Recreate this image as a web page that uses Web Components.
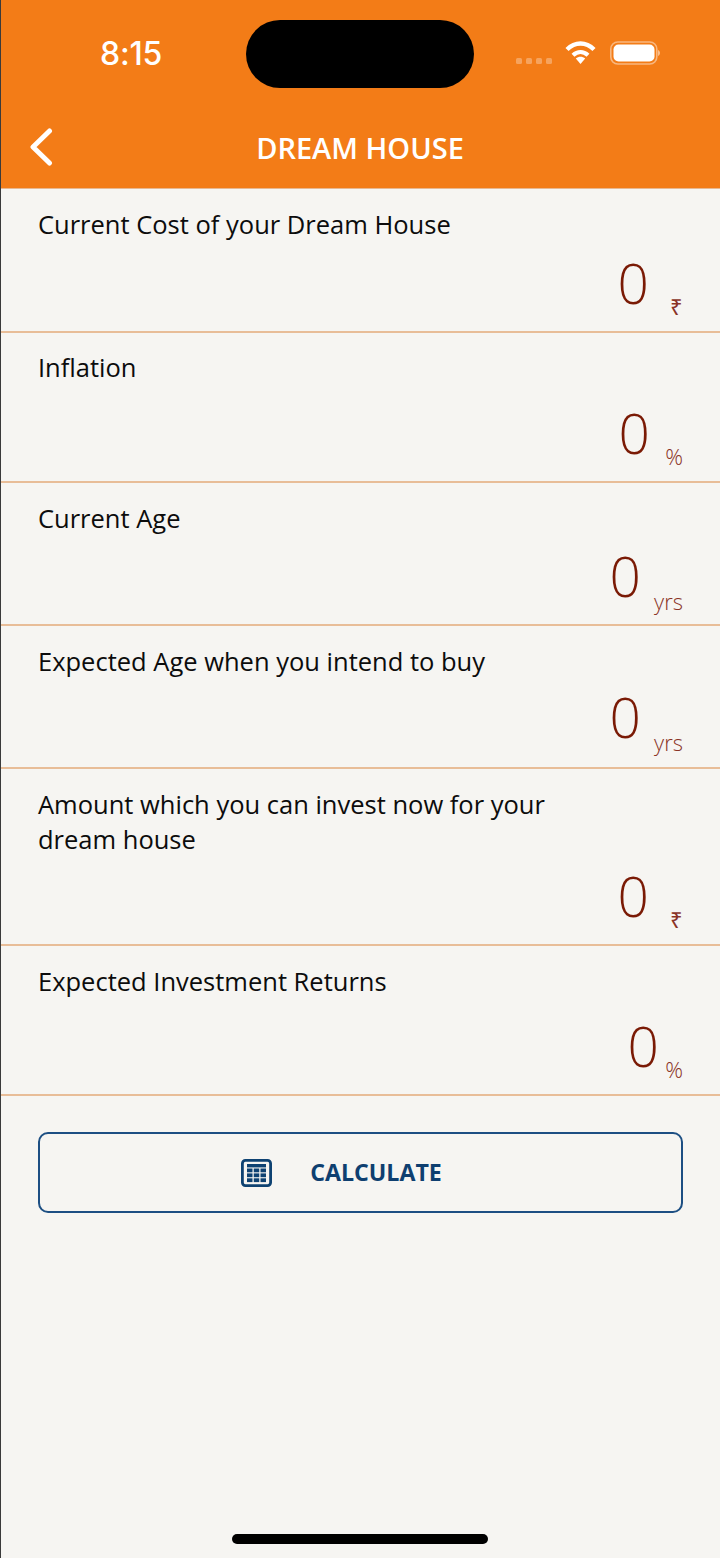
<!DOCTYPE html>
<html>
<head>
<meta charset="utf-8">
<title>Dream House</title>
<style>
  html, body { margin: 0; padding: 0; background: #f6f5f2; }
</style>
</head>
<body>
<app-screen>
  <status-bar slot="top" time="8:15"></status-bar>
  <nav-bar slot="top" title="DREAM HOUSE"></nav-bar>
  <input-row h="144" label="Current Cost of your Dream House" unit="₹" unit-w="34"></input-row>
  <input-row h="150" pad="17" label="Inflation" unit="%" unit-w="33"></input-row>
  <input-row h="143" drop="8" label="Current Age" unit="yrs" unit-w="42"></input-row>
  <input-row h="143" drop="8" lift="18" label="Expected Age when you intend to buy" unit="yrs" unit-w="42"></input-row>
  <input-row h="177" label="Amount which you can invest now for your dream house" unit="₹" unit-w="34"></input-row>
  <input-row h="150" label="Expected Investment Returns" unit="%" unit-w="24"></input-row>
  <calc-button>CALCULATE</calc-button>
  <home-bar slot="bottom"></home-bar>
</app-screen>

<script>
class AppScreen extends HTMLElement {
  constructor() {
    super();
    this.attachShadow({ mode: 'open' });
    this.shadowRoot.innerHTML = `
      <style>
        :host {
          display: flex;
          flex-direction: column;
          width: 720px;
          height: 1558px;
          box-sizing: border-box;
          border-left: 1px solid #3a3a3a;
          background: #f6f5f2;
          font-family: "Open Sans", sans-serif;
          overflow: hidden;
        }
        main { flex: 1; display: flex; flex-direction: column; }
      </style>
      <slot name="top"></slot>
      <main><slot></slot></main>
      <slot name="bottom"></slot>
    `;
  }
}

class StatusBar extends HTMLElement {
  constructor() {
    super();
    this.attachShadow({ mode: 'open' });
    this.shadowRoot.innerHTML = `
      <style>
        :host { display: flex; align-items: center; height: 108px; background: #f37c17; color: #fff; }
        .time { margin-left: 99px; margin-top: -1px; font: 500 32px/40px Inter, "Open Sans", sans-serif; letter-spacing: -0.2px; width: 146px; }
        .island { width: 228px; height: 68px; border-radius: 34px; background: #000; }
        .right { display: flex; align-items: center; margin-left: 42px; }
        .dots { display: flex; gap: 4px; margin-top: 14px; margin-right: 13px; }
        .dots i { width: 6px; height: 6px; border-radius: 1.5px; background: rgba(255,255,255,.3); }
        svg { display: block; }
      </style>
      <span class="time"></span>
      <div class="island"></div>
      <div class="right">
        <div class="dots"><i></i><i></i><i></i><i></i></div>
        <svg width="31" height="25" viewBox="0 0 31 25" style="margin-top:-3px">
          <path d="M2 9.5C10 1.5 21 1.5 29 9.5" fill="none" stroke="#fff" stroke-width="4.4"/>
          <path d="M8 15.2C12.5 11 18.5 11 23 15.2" fill="none" stroke="#fff" stroke-width="4.2"/>
          <path d="M10.8 18.6C13.6 16.1 17.4 16.1 20.2 18.6L15.5 24Z" fill="#fff"/>
        </svg>
        <svg width="50" height="24" viewBox="0 0 50 24" style="margin-left:14px;margin-top:-2px">
          <rect x=".8" y="1" width="46" height="22" rx="7" fill="none" stroke="#fff" stroke-opacity=".45" stroke-width="1.6"/>
          <rect x="3.5" y="3.5" width="41" height="17" rx="5" fill="#fff"/>
          <path d="M48 9C49.2 9.6 50 10.7 50 12C50 13.3 49.2 14.4 48 15Z" fill="#fff" fill-opacity=".5"/>
        </svg>
      </div>
    `;
    this.shadowRoot.querySelector('.time').textContent = this.getAttribute('time');
  }
}

class NavBar extends HTMLElement {
  constructor() {
    super();
    this.attachShadow({ mode: 'open' });
    this.shadowRoot.innerHTML = `
      <style>
        :host { display: flex; align-items: center; justify-content: center; height: 80px; background: #f37c17; color: #fff; position: relative; border-bottom: 1px solid #e8b890; }
        .back { position: absolute; left: 27px; top: 20px; display: block; }
        .title { font-size: 29px; font-weight: 600; line-height: 40px; margin-left: -1px; }
      </style>
      <svg class="back" width="26" height="38" viewBox="0 0 26 38">
        <path d="M21.5 3L5 19L21.5 35" fill="none" stroke="#fff" stroke-width="5" stroke-linecap="round" stroke-linejoin="round"/>
      </svg>
      <span class="title"></span>
    `;
    this.shadowRoot.querySelector('.title').textContent = this.getAttribute('title');
  }
}

class InputRow extends HTMLElement {
  constructor() {
    super();
    this.attachShadow({ mode: 'open' });
    this.shadowRoot.innerHTML = `
      <style>
        :host {
          display: flex;
          flex-direction: column;
          justify-content: space-between;
          box-sizing: border-box;
          border-bottom: 2px solid #e8bd98;
          padding: 18px 37px 16px;
        }
        .label { font-size: 25.5px; line-height: 35px; color: #0c0c0c; max-width: 540px; }
        .val { display: flex; justify-content: flex-end; align-items: flex-end; color: #7a1a05; }
        .num { font-size: 55px; font-weight: 300; line-height: 64px; }
        .unit { font-size: 22px; font-weight: 300; line-height: 30px; color: #8a3326; text-align: right; margin-bottom: -6px; }
      </style>
      <div class="label"></div>
      <div class="val"><span class="num">0</span><span class="unit"></span></div>
    `;
    this.shadowRoot.querySelector('.label').textContent = this.getAttribute('label');
    let unit = this.shadowRoot.querySelector('.unit');
    unit.textContent = this.getAttribute('unit');
    unit.style.width = this.getAttribute('unit-w') + 'px';
    if (this.hasAttribute('drop')) unit.style.marginBottom = -this.getAttribute('drop') + 'px';
    this.style.height = this.getAttribute('h') + 'px';
    if (this.hasAttribute('pad')) this.style.paddingTop = this.getAttribute('pad') + 'px';
    if (this.hasAttribute('lift')) this.style.paddingBottom = this.getAttribute('lift') + 'px';
  }
}

class CalcButton extends HTMLElement {
  constructor() {
    super();
    this.attachShadow({ mode: 'open' });
    this.shadowRoot.innerHTML = `
      <style>
        :host {
          display: flex;
          align-items: center;
          justify-content: center;
          gap: 38px;
          box-sizing: border-box;
          width: 645px;
          height: 81px;
          margin: 36px 0 0 37px;
          padding: 0 38px 2px 0;
          border: 2px solid #1d4f83;
          border-radius: 10px;
          color: #0e3f70;
          font-size: 23.2px;
          font-weight: 700;
        }
        svg { display: block; margin-top: 2px; }
      </style>
      <svg width="31" height="28" viewBox="0 0 31 28">
        <rect x="1.4" y="1.4" width="28.2" height="25.2" rx="3" fill="none" stroke="#0e4272" stroke-width="2.8"/>
        <g fill="#0e4272">
          <rect x="6" y="5" width="19" height="3.4"/>
          <rect x="6" y="9.5" width="5.5" height="3.8"/><rect x="12.75" y="9.5" width="5.5" height="3.8"/><rect x="19.5" y="9.5" width="5.5" height="3.8"/>
          <rect x="6" y="14.4" width="5.5" height="3.8"/><rect x="12.75" y="14.4" width="5.5" height="3.8"/><rect x="19.5" y="14.4" width="5.5" height="3.8"/>
          <rect x="6" y="19.3" width="5.5" height="3.8"/><rect x="12.75" y="19.3" width="5.5" height="3.8"/><rect x="19.5" y="19.3" width="5.5" height="3.8"/>
        </g>
      </svg>
      <slot></slot>
    `;
  }
}

class HomeBar extends HTMLElement {
  constructor() {
    super();
    this.attachShadow({ mode: 'open' });
    this.shadowRoot.innerHTML = `
      <style>
        :host { display: flex; justify-content: center; padding-bottom: 14px; }
        div { width: 256px; height: 10px; border-radius: 5px; background: #000; margin-left: -1px; }
      </style>
      <div></div>
    `;
  }
}

customElements.define('app-screen', AppScreen);
customElements.define('status-bar', StatusBar);
customElements.define('nav-bar', NavBar);
customElements.define('input-row', InputRow);
customElements.define('calc-button', CalcButton);
customElements.define('home-bar', HomeBar);
</script>
</body>
</html>
